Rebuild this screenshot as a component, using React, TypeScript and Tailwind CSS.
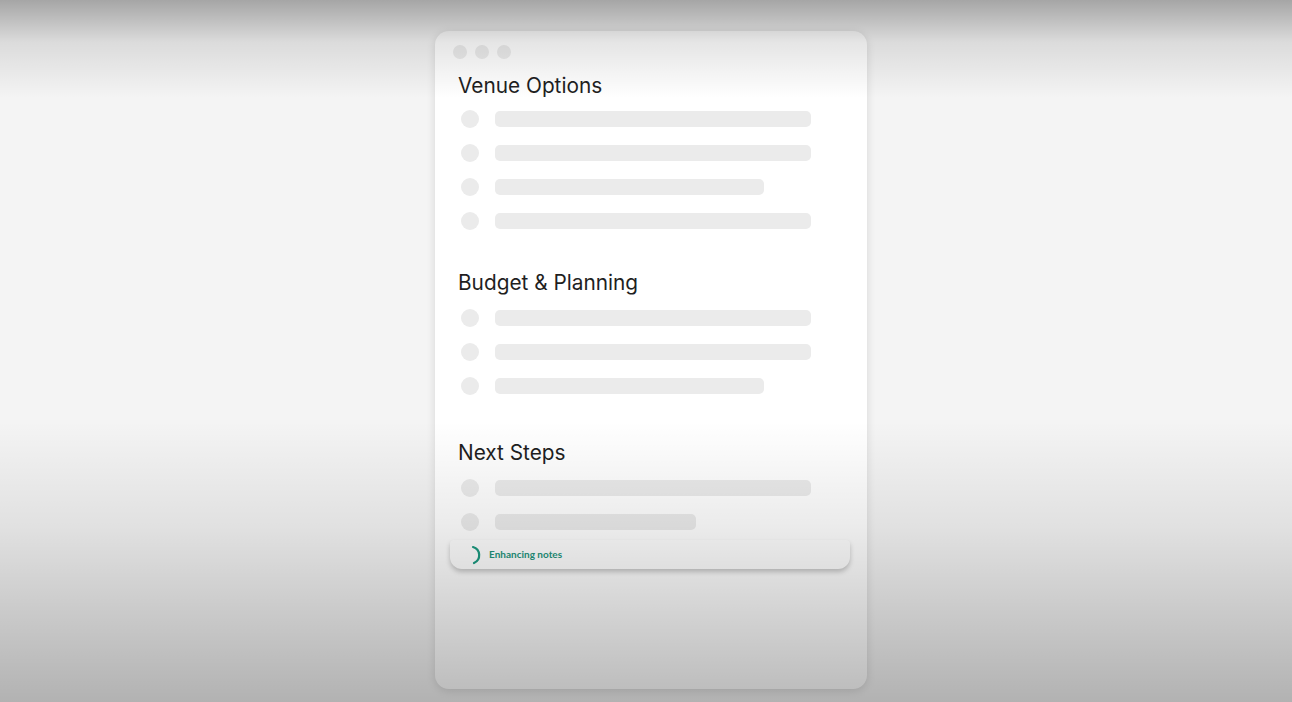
function Row({ w }: { w: string }) {
  return (
    <div className="flex items-center h-[18px]">
      <div className="size-[18px] rounded-full bg-[#ebebeb] ml-[3px]" />
      <div className={`h-[16px] rounded-[5px] bg-[#ebebeb] ml-4 ${w}`} />
    </div>
  );
}

export default function App() {
  return (
    <div
      className="relative w-[1292px] h-[702px] overflow-hidden bg-[#f4f4f4] flex justify-center pl-[10px]"
      style={{ fontFamily: "Inter, 'Noto Sans', sans-serif" }}
    >
      <div className="mt-[31px] w-[432px] h-[658px] rounded-[14px] bg-white shadow-[0_2px_10px_rgba(0,0,0,0.12)] flex flex-col">
        <div className="flex gap-2 pl-[18px] pt-[14px]">
          <div className="size-[14px] rounded-full bg-[#ececec]" />
          <div className="size-[14px] rounded-full bg-[#ececec]" />
          <div className="size-[14px] rounded-full bg-[#ececec]" />
        </div>

        <div className="pl-[23px] pt-[13px] flex flex-col">
          <h2 className="text-[20.8px] leading-[28px] text-[#1f1f1f]">Venue Options</h2>
          <div className="flex flex-col gap-4 mt-[10px]">
            <Row w="w-[316px]" />
            <Row w="w-[316px]" />
            <Row w="w-[269px]" />
            <Row w="w-[316px]" />
          </div>

          <h2 className="text-[20.8px] leading-[28px] text-[#1f1f1f] mt-[39px]">Budget &amp; Planning</h2>
          <div className="flex flex-col gap-4 mt-3">
            <Row w="w-[316px]" />
            <Row w="w-[316px]" />
            <Row w="w-[269px]" />
          </div>

          <h2 className="text-[20.8px] leading-[28px] text-[#1f1f1f] mt-[44px]">Next Steps</h2>
          <div className="flex flex-col gap-4 mt-3">
            <Row w="w-[316px]" />
            <Row w="w-[201px]" />
          </div>
        </div>

        <div className="ml-[15px] mr-[17px] mt-[9px] h-[29px] rounded-b-[12px] rounded-t-[4px] bg-white shadow-[0_3px_5px_rgba(0,0,0,0.22)] flex items-center pl-[20px] gap-[5px]">
          <svg width="14" height="20" viewBox="0 0 14 20" fill="none">
            <path d="M3 2 A8.5 8.5 0 0 1 4 18" stroke="#1c9a80" strokeWidth="2.2" strokeLinecap="round" />
          </svg>
          <span
            className="text-[10px] font-bold text-[#24947c]"
            style={{ fontFamily: "Lato, 'Noto Sans', sans-serif" }}
          >
            Enhancing notes
          </span>
        </div>
      </div>

      <div className="pointer-events-none absolute inset-0 bg-[linear-gradient(to_bottom,rgba(0,0,0,0.32)_0%,rgba(0,0,0,0.1)_6%,rgba(0,0,0,0)_14%,rgba(0,0,0,0)_60%,rgba(0,0,0,0.08)_75%,rgba(0,0,0,0.27)_100%)]" />
    </div>
  );
}
